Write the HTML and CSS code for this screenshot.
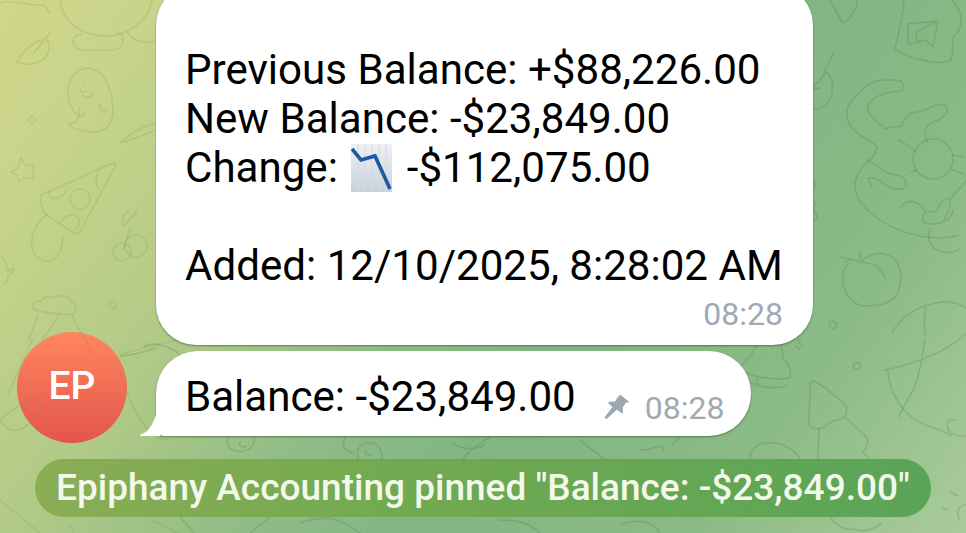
FILE: index.html
```html
<!DOCTYPE html>
<html lang="en">
<head>
<meta charset="utf-8">
<title>Chat</title>
<link rel="stylesheet" href="styles.css">
</head>
<body>
<main class="chat">
  <svg class="doodles" viewBox="0 0 966 533" aria-hidden="true">
    <g class="d-light">
      <path d="M60 0c2 22 22 36 45 36s43-14 47-36"/>
      <path d="M82 34c-12 0-12 16 2 16h28c14 0 14-16 6-17M128 33c6 10 20 10 27 8"/>
      <path d="M0 3c15-4 24 2 35 2 5-2 12 0 14 8"/>
      <path d="M17 62c8-14 20-24 30-22 5 8 1 20-11 23-6 2-14 1-19-1zM50 33l-16 20"/>
      <path d="M68 95c0-18 10-28 22-27 14 2 21 20 23 38 1 14-5 26-18 26-10 0-20-2-27-8 6 0 10-3 11-8-8-6-11-12-11-21z"/>
      <path d="M80 90l3 3 4-2M84 84v1M94 85v1M82 95c3 4 9 3 12-2M79 107v6c0 4 5 4 6 0M100 103v4c0 4 6 5 7 1"/>
      <circle cx="32" cy="120" r="3.5"/>
      <path d="M120 143c10-10 22-16 35-20M120 143c14-3 24-8 35-13"/>
      <path d="M21 158l5 8 8-2-1 9 1 6-10-1-5 4-2-7-6-3 7-5z"/>
      <path d="M41 195l72-32c3 0 3 3 1 6L80 232c-2 2-4 2-6 1l-29-19c-3-5-5-12-4-19z"/>
      <path d="M48 192c3 10 14 8 19-3M100 168c-4 6-6 16 0 22"/>
      <circle cx="80" cy="199" r="10"/>
      <path d="M60 224c3-9 13-11 17-7 4 3 3 7-1 11"/>
      <path d="M48 214c-13 9-18 22-16 34 3 12 14 16 22 11 7-5 9-14 9-24"/>
      <path d="M123 226c-2-8 2-12 6-16M123 226c4-4 8-6 14-16M130 228l-6 20"/>
      <circle cx="122" cy="252" r="9"/>
      <circle cx="136" cy="246" r="11"/>
      <path d="M0 255c6 5 6 10 8 16 2-1 5-3 6-3-1 4-3 6-6 7 0 6-2 8-4 8"/>
      <circle cx="113" cy="305" r="3.5"/>
      <path d="M33 308c-2-5 4-8 8-6 2-6 10-7 14-4 5-4 14-3 17 4 5 2 5 10 1 13-8-2-30 0-40-7z"/>
      <path d="M38 315l-10 26M60 314l-18 26M72 316l22 40"/>
      <path d="M32 340l-24 55M0 420c14-12 20-16 34-24l8 14c-10 8-16 20-24 20-8 2-14-4-18-10z"/>
      <path d="M120 355c40-12 70-22 95-10M116 360c16 50 30 80 52 80"/>
      <path d="M0 500l40 33M70 525l4 8M150 520c30 10 20 13 30 13"/>
    </g>
    <g class="d-dark">
      <path d="M830 0c4 8 8 14 12 22 4 0 8-2 10-8 4-4 6-8 5-14"/>
      <path d="M820 88c-8 2-13-2-16 0M802 90c10-1 18-8 24-18 8 6 9 22 1 32-6 6-18 6-24 4M834 52l-10 20"/>
      <path d="M904 0c-1 18-6 34-9 49 10 8 42 17 54 12 5-1 3-14 4-24 6-5 9-12 8-20-1-6-4-12-9-17"/>
      <path d="M908 24l30-3-5 25-8-6-9 3-8 1zM938 21l-22 11 1 9 8-1"/>
      <path d="M806 175c8 0 10 8 8 14-4 4-2 12 2 14-4 4-2 10 1 12 2 4-4 8-11 3"/>
      <path d="M901 81c-10-2-28-2-36 6-12 12-20 18-18 30 2 12 14 20 26 26 8 6 2 8 0 14-10 8-22 22-17 36 4 14 24 30 46 38 16 6 40 10 56 4"/>
      <path d="M901 81c4 4 4 10-2 10-8 0-24 4-30 12-4 8 2 14 16 26l2-1 14-2 6-10c4-6 14-2 22-8 6-4 16-6 18 0 2 8-8 12-14 14-4 2-8 4-8 12l2 8"/>
      <circle cx="933" cy="159" r="20"/>
      <path d="M898 140c8 4 14 8 18 12M917 170l-6 2M953 155l10 2M952 170l12 4"/>
      <path d="M866 160c4 0 14 8 20 12 8 4 18 2 20 10 2 8-6 8-14 6-10-4-16-12-24-10l4 10"/>
      <path d="M900 208c8-10 18-8 24 2 6 4 14 2 16-6 2-4 8-6 10-4 2 8-4 14-6 20M925 212c-4 8-4 12 6 12 10 0 20-2 22-14M950 200c4-10 16-14 16-20"/>
      <path d="M930 228c-2 8-2 14 4 20 8 6 20 6 26 0"/>
      <path d="M846 262c4-4 6-3 14 0 14-12 30-10 37 0 6 10 4 24 0 32-6 10-18 12-34 12-10-2-18-12-20-22-1-8 1-16 5-20M841 257c8 2 18 4 24 6 8 0 14 2 20 14M860 258v-6"/>
      <circle cx="833" cy="325" r="3.5"/>
      <path d="M892 333c10-18 26-28 50-31 10-1 18 2 24 6M926 303c-2 14-2 24-1 33"/>
      <path d="M888 370c0 16 10 36 22 46 14 12 30 12 42 20"/>
      <path d="M885 370c30-6 60-18 81-36M925 340c-4 20-4 30-10 46-6 14-14 22-16 31"/>
      <path d="M956 420c-6-2-10 0-8 10 6 6 12 6 18 6"/>
      <circle cx="857" cy="366" r="3.5"/>
      <path d="M810 386c-1-4 3-6 6-4 14 8 22 16 30 24 2 8 0 12-8 14-10 0-10 8-20 9-6 0-9-2-9-7 0-12 1-24 1-36z"/>
      <path d="M819 429l-1 30M846 418c8 8 16 14 21 20 2 6 0 10-4 14l6 6"/>
      <path d="M753 352c-6 10-12 16-22 18 8 0 16 2 24 6 8 2 24 4 34 2 4-6 0-14-6-20 0-8-2-20-10-20-8-1-16 4-20 14zM738 378c6 2 14 6 22 8 10 2 20 2 26 0M756 384l3-8"/>
      <path d="M796 346l3 3M798 340l3 5"/>
      <path d="M750 459c0-8 6-16 16-16 16-2 30 8 34 16"/>
      <path d="M830 517c6 8 14 14 24 12 10 4 20 0 28-6M950 492l8 4M942 508l6 2M966 505c-8 0-10 8-6 16"/>
      <path d="M680 437l-8 8M580 440l24 19M640 450c14 0 22-8 24 0M490 437c-12 8-20 12-27 22M484 445c-10 6-24 4-32-2"/>
      <path d="M228 437c-2 6 0 14 10 14 10 2 18-6 16-14M240 442c-2 4 2 6 6 4"/>
      <path d="M345 437c-4 8 0 14 8 16M358 459c-2-10 2-16 12-16 8 0 12 6 12 16M366 450c-2 4 2 6 6 4"/>
      <path d="M180 355c-10-10-30-14-36-8M120 356c12 0 30-6 36-8"/>
      <path d="M180 517l14 16M270 517l-20 16M300 523c30-10 40-4 60 10M500 520c20 0 30 4 40 13M620 525c14-6 30-6 40 8"/>
    </g>
  </svg>

  <article class="bubble bubble-long">
    <p class="line">Previous Balance: +$88,226.00</p>
    <p class="line">New Balance: -$23,849.00</p>
    <p class="line">Change: <svg class="emoji" viewBox="0 0 41 48" aria-hidden="true"><defs><linearGradient id="emoji-bg" x1="0" y1="0" x2="0" y2="1"><stop offset="0" stop-color="#edf0f3"/><stop offset="1" stop-color="#c8d2dc"/></linearGradient></defs><rect width="41" height="48" fill="url(#emoji-bg)"/><path d="M7 0v48M14 0v48M21 0v48M28 0v48M35 0v48" stroke="#d3dae1" stroke-width="1"/><path d="M1 5L10 16 24 12 39 45" fill="none" stroke="#1c5aa6" stroke-width="3.6"/></svg> -$112,075.00</p>
    <p class="line line-gap">Added: 12/10/2025, 8:28:02 AM</p>
    <div class="meta meta-end"><span class="time">08:28</span></div>
  </article>

  <section class="row">
    <div class="avatar">EP</div>
    <article class="bubble bubble-short">
      <svg class="tail" viewBox="0 0 20 20" aria-hidden="true"><path d="M20 0H15.500C14 6 10 12 7 15 5 17 2 18 .5 18.500-.5 19 0 20 1 20H20z"/></svg>
      <p class="line line-short">Balance: -$23,849.00</p>
      <div class="meta">
        <svg class="pin" viewBox="0 0 24 24" aria-hidden="true"><path d="M15.5 .5l8.2 6.6c.4.6 0 1.2-.6 1.2l-1.8-.4-3.4 5 .4 4.5c0 .9-.8 1.3-1.5.8l-4.5-3.2L2.500 24 .5 22.500l7.500-10-3.600-3.400c-.6-.7-.2-1.500.7-1.600l5.500-.2 3.300-5.300c.4-.6 1-.8 1.600-.5z"/></svg>
        <span class="time">08:28</span>
      </div>
    </article>
  </section>

  <div class="service">Epiphany Accounting pinned "Balance: -$23,849.00"</div>
</main>
</body>
</html>
```

FILE: styles.css
```css
* { box-sizing: border-box; }

html, body {
  margin: 0;
  padding: 0;
}

.chat {
  position: relative;
  width: 966px;
  height: 533px;
  overflow: hidden;
  display: flex;
  flex-direction: column;
  justify-content: flex-end;
  padding-bottom: 16px;
  font-family: Roboto, "Liberation Sans", sans-serif;
  background: linear-gradient(127deg, #d0d68b 0%, #c8d48a 11%, #b2ca87 30%, #8fbc86 47%, #81b584 60%, #8bbb85 80%, #aacb9a 100%);
}

.doodles {
  position: absolute;
  top: 0;
  left: 0;
  width: 966px;
  height: 533px;
  fill: none;
  stroke-width: 1.6;
  stroke-linecap: round;
  stroke-linejoin: round;
}

.d-light { stroke: rgba(120, 150, 70, .2); }
.d-dark { stroke: rgba(60, 120, 70, .22); }

.bubble {
  position: relative;
  flex-shrink: 0;
  background: #fff;
  color: #000;
  box-shadow: 0 1px 2px rgba(40, 70, 30, .55);
}

.bubble-long {
  align-self: flex-start;
  width: 657px;
  margin-left: 156px;
  padding: 60px 30px 15px 29px;
  border-radius: 40px;
}

.bubble-short {
  display: flex;
  align-items: flex-end;
  gap: 28px;
  width: 595px;
  height: 85px;
  padding: 21px 29px 12px 29px;
  border-radius: 42px 42px 42px 8px;
}

.line {
  margin: 0;
  font-size: 42.1px;
  line-height: 49px;
  white-space: nowrap;
}

.line-gap { margin-top: 49px; }
.line-short { margin-bottom: 3px; }

.emoji {
  width: 41px;
  height: 48px;
  margin: -14px 4px -8px 3px;
  vertical-align: -2px;
}

.meta {
  display: flex;
  align-items: center;
  gap: 16px;
  margin-left: auto;
}

.meta-end {
  justify-content: flex-end;
  margin-top: 9px;
}

.time {
  font-size: 32px;
  line-height: 31px;
  color: #a1a9b3;
}

.pin {
  width: 25px;
  height: 25px;
  margin-top: -4px;
  fill: #9ca7b3;
}

.row {
  display: flex;
  align-items: flex-start;
  gap: 29px;
  margin-top: 6px;
  padding-left: 17px;
}

.avatar {
  display: flex;
  align-items: center;
  justify-content: center;
  flex-shrink: 0;
  width: 110px;
  height: 111px;
  margin-top: -19px;
  margin-bottom: -7px;
  padding-bottom: 4px;
  border-radius: 50%;
  background: linear-gradient(180deg, #ff8660, #e4554a);
  color: #fff;
  font-size: 39px;
  font-weight: 500;
}

.tail {
  position: absolute;
  left: -16px;
  bottom: 0;
  width: 20px;
  height: 20px;
  fill: #fff;
}

.service {
  align-self: center;
  width: 896px;
  height: 58px;
  margin-top: 23px;
  padding: 0 21px;
  border-radius: 29px;
  background: linear-gradient(90deg, #8aad55, #71a950 42%, #5aa458);
  color: #f3f9ea;
  font-size: 37px;
  font-weight: 500;
  line-height: 58px;
  white-space: nowrap;
}
```
